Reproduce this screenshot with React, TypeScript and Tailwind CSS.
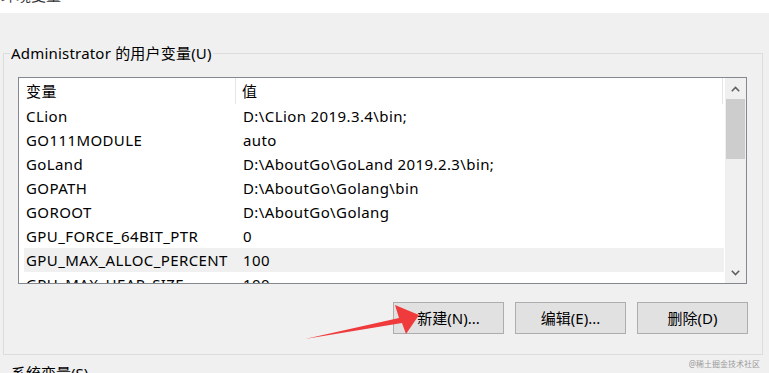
import React from 'react';

const font = { fontFamily: '"Noto Sans", "Noto Sans CJK SC", sans-serif' };

const rows: [string, string][] = [
  ['CLion', 'D:\\CLion 2019.3.4\\bin;'],
  ['GO111MODULE', 'auto'],
  ['GoLand', 'D:\\AboutGo\\GoLand 2019.2.3\\bin;'],
  ['GOPATH', 'D:\\AboutGo\\Golang\\bin'],
  ['GOROOT', 'D:\\AboutGo\\Golang'],
  ['GPU_FORCE_64BIT_PTR', '0'],
  ['GPU_MAX_ALLOC_PERCENT', '100'],
  ['GPU_MAX_HEAP_SIZE', '100'],
];

function Chevron({ up }: { up?: boolean }) {
  return (
    <svg width="9" height="6" viewBox="0 0 9 6" className={up ? '' : 'rotate-180'}>
      <path d="M0.8 5.2 L4.5 1.5 L8.2 5.2" fill="none" stroke="#606060" strokeWidth="1.6" />
    </svg>
  );
}

function Btn({ label }: { label: string }) {
  return (
    <button className="w-[111px] h-[32px] bg-[#e1e1e1] border border-[#adadad] text-[15px] text-black leading-none">
      {label}
    </button>
  );
}

export default function App() {
  return (
    <div className="relative w-[769px] h-[373px] overflow-hidden bg-[#f0f0f0] text-black" style={font}>
      {/* window title, mostly scrolled out */}
      <div className="h-[13px] bg-white overflow-hidden">
        <div className="-mt-[15px] pl-[1px] text-[15px] leading-[20px] text-[#333]">环境变量</div>
      </div>

      <fieldset className="ml-[3px] mt-[30px] w-[760px] h-[312px] border border-[#dcdcdc] px-[14px]">
        <legend className="-ml-[8px] px-[1px] text-[15px] tracking-[0.2px] leading-[20px]">Administrator 的用户变量(U)</legend>

        <div className="mt-[14px] h-[207px] w-[729px] border border-[#828790] bg-white flex overflow-hidden">
          <div className="flex-1 flex flex-col overflow-hidden text-[15px] tracking-[0.4px]">
            <div className="h-[26px] flex shrink-0 leading-[26px]">
              <div className="w-[217px] pl-[7px] border-r border-[#e5e5e5]">变量</div>
              <div className="w-[487px] pl-[6px] border-r border-[#e5e5e5]">值</div>
            </div>
            {rows.map(([k, v], i) => (
              <div
                key={k}
                className={`ml-[5px] mr-[1px] h-[24px] shrink-0 grid grid-cols-[212px_1fr] leading-[24px] ${i === 6 ? 'bg-[#f0f0f0]' : ''}`}
              >
                <div className="pl-[2px] whitespace-nowrap">{k}</div>
                <div className="pl-[7px] whitespace-nowrap">{v}</div>
              </div>
            ))}
          </div>
          <div className="w-[21px] bg-[#f0f0f0] flex flex-col items-center">
            <div className="h-[21px] flex items-center justify-center">
              <Chevron up />
            </div>
            <div className="w-[19px] h-[60px] bg-[#cdcdcd]" />
            <div className="flex-1" />
            <div className="h-[21px] flex items-center justify-center">
              <Chevron />
            </div>
          </div>
        </div>

        <div className="mt-[18px] flex justify-end gap-[11px]">
          <Btn label="新建(N)..." />
          <Btn label="编辑(E)..." />
          <Btn label="删除(D)" />
        </div>
      </fieldset>

      <div className="mt-[8px] pl-[11px] text-[15px] leading-[20px]">系统变量(S)</div>

      {/* watermark */}
      <div className="absolute right-[9px] top-[359px] text-[8px] leading-[10px] text-[#9a9a9a]">@稀土掘金技术社区</div>

      {/* red annotation arrow */}
      <svg className="absolute left-0 top-0 pointer-events-none" width="769" height="373">
        <polygon
          points="305,339 399,318 395,305 419,315 406,334 402,323"
          fill="#ef3b3b"
        />
      </svg>
    </div>
  );
}
